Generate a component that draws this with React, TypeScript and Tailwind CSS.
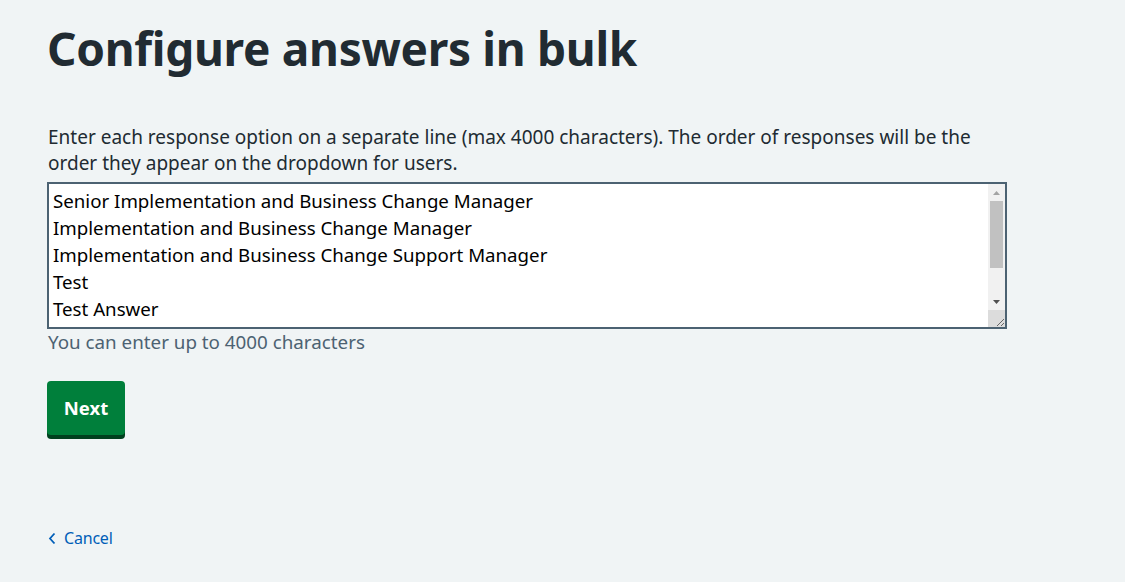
import React from "react";

const lines = [
  "Senior Implementation and Business Change Manager",
  "Implementation and Business Change Manager",
  "Implementation and Business Change Support Manager",
  "Test",
  "Test Answer",
];

export default function App() {
  return (
    <div
      className="min-h-[582px] w-full bg-[#f0f4f5] text-[#212b32]"
      style={{ fontFamily: '"Noto Sans", Arial, sans-serif' }}
    >
      <div className="w-[1000px] pl-[47px] pt-[16px]">
        <h1 className="text-[46px] font-bold leading-[64px] tracking-[-0.3px]">Configure answers in bulk</h1>
        <p className="mt-[44px] w-[930px] text-[19px] leading-[26px] pl-[1px]">
          Enter each response option on a separate line (max 4000 characters). The order of responses will be the
          order they appear on the dropdown for users.
        </p>
        <div className="mt-[6px] flex h-[147px] w-[960px] border-2 border-[#4c6272] bg-white">
          <div className="flex-1 overflow-hidden pl-[4px] pt-[3px] text-[18.7px] leading-[27px] text-black">
            {lines.map((l) => (
              <div key={l}>{l}</div>
            ))}
          </div>
          <div className="relative flex w-[17px] flex-col bg-[#f1f1f1]">
            <div className="flex h-[17px] items-center justify-center">
              <svg width="7" height="4" viewBox="0 0 7 4"><path d="M3.5 0L7 4H0z" fill="#a3a3a3" /></svg>
            </div>
            <div className="mx-[2px] h-[67px] bg-[#c1c1c1]" />
            <div className="flex-1" />
            <div className="flex h-[17px] items-center justify-center">
              <svg width="7" height="4" viewBox="0 0 7 4"><path d="M0 0H7L3.5 4z" fill="#505050" /></svg>
            </div>
            <div className="relative h-[17px] bg-[#dcdcdc]">
              <svg className="absolute right-0 bottom-0" width="10" height="10" viewBox="0 0 10 10">
                <path d="M9 2L2 9M9 6L6 9" stroke="#666" strokeWidth="1" />
              </svg>
            </div>
          </div>
        </div>
        <div className="mt-0 pl-[1px] text-[18.8px] leading-[26px] text-[#4c6272]">You can enter up to 4000 characters</div>
        <button className="mt-[26px] h-[54px] w-[78px] rounded-[4px] bg-[#007f3b] text-[18.5px] font-bold text-white shadow-[0_4px_0_#00401e]">
          Next
        </button>
        <div className="mt-[91px] flex items-center gap-[8px] pl-[1px] text-[16px] text-[#005eb8]">
          <svg width="8" height="13" viewBox="0 0 8 13">
            <path d="M6.5 1.5L2 6.5L6.5 11.5" fill="none" stroke="#005eb8" strokeWidth="1.8" />
          </svg>
          <span className="tracking-[-0.2px]">Cancel</span>
        </div>
      </div>
    </div>
  );
}
